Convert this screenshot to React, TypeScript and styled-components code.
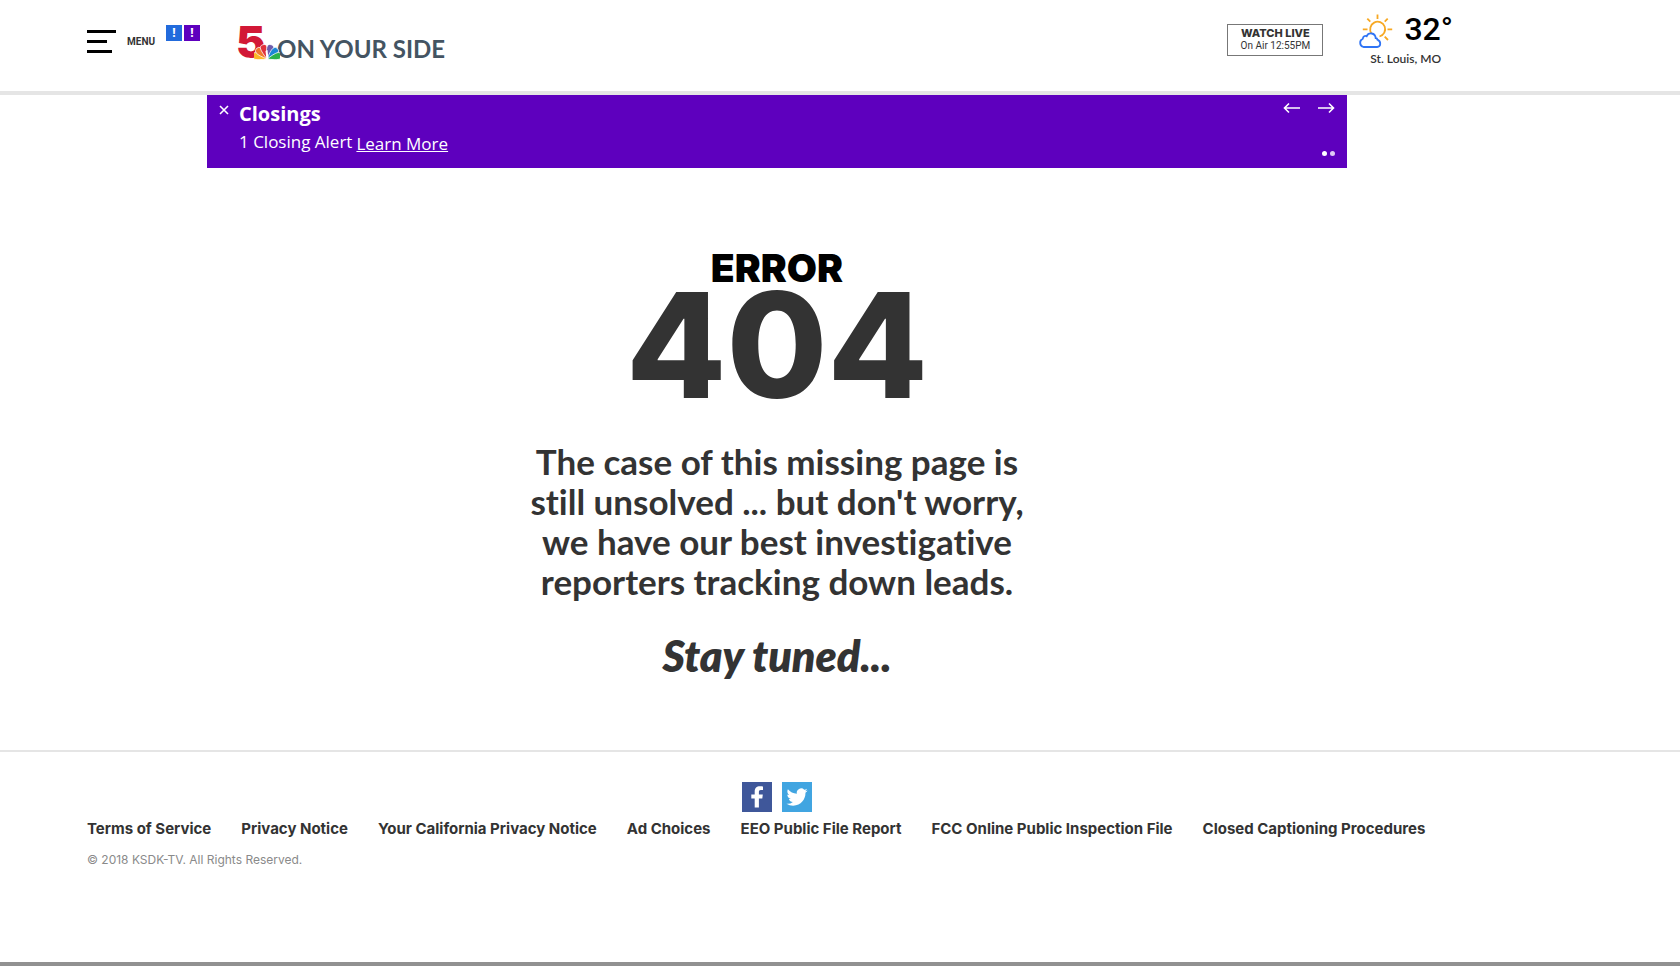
import React from "react";
import styled, { createGlobalStyle } from "styled-components";

const GlobalStyle = createGlobalStyle`
  * { box-sizing: border-box; }
  body {
    margin: 0;
    background: #fff;
    color: #333;
    font-family: Lato, "Open Sans", sans-serif;
    font-variant-ligatures: none;
  }
  h1, h2, p, ul { margin: 0; padding: 0; }
  button { font: inherit; border: 0; padding: 0; background: none; color: inherit; cursor: pointer; }
  a { color: inherit; text-decoration: none; }
`;

const Page = styled.div`
  min-height: 100vh;
  display: flex;
  flex-direction: column;
  border-bottom: 4px solid #919191;
`;

const Header = styled.header`
  display: flex;
  align-items: flex-start;
  justify-content: space-between;
  height: 95px;
  padding: 0 227px 0 87px;
  border-bottom: 4px solid #e5e5e5;
`;

const HeaderGroup = styled.div`
  display: flex;
  align-items: flex-start;
`;

const MenuButton = styled.button`
  display: flex;
  align-items: center;
  gap: 11px;
  margin-top: 30px;
  font: 700 10px/12px Roboto, sans-serif;
`;

const MenuBars = styled.span`
  display: flex;
  flex-direction: column;
  gap: 7px;
  width: 29px;
`;

const Bar = styled.span<{ $width: number }>`
  height: 3px;
  width: ${(p) => p.$width}px;
  background: #000;
`;

const Badges = styled.div`
  display: flex;
  gap: 2px;
  margin: 25px 0 0 11px;
`;

const Badge = styled.button<{ $color: string }>`
  width: 16px;
  height: 16px;
  background: ${(p) => p.$color};
  color: #fff;
  font: 700 12px/16px "Open Sans", sans-serif;
`;

const Logo = styled.a`
  position: relative;
  display: flex;
  align-items: baseline;
  margin: 20px 0 0 36px;
  line-height: 44px;
`;

const LogoNumber = styled.span`
  width: 41px;
  color: #d21836;
  font-family: Inter, sans-serif;
  font-weight: 900;
  font-size: 44px;
`;

const LogoName = styled.span`
  color: #445462;
  font-family: Lato, sans-serif;
  font-weight: 700;
  font-size: 24px;
`;

const Peacock = styled.svg`
  position: absolute;
  left: 18px;
  top: 23px;
`;

const WatchLive = styled.a`
  display: flex;
  flex-direction: column;
  align-items: center;
  width: 96px;
  height: 32px;
  margin: 24px 35px 0 0;
  padding-top: 1px;
  border: 1px solid #777;
  font: 400 10px/12px Roboto, sans-serif;
`;

const WatchTitle = styled.strong`
  font: 800 11px/14px Inter, sans-serif;
`;

const Weather = styled.a`
  display: flex;
  flex-direction: column;
  align-items: center;
  margin-top: 13px;
`;

const WeatherNow = styled.span`
  display: flex;
  gap: 10px;
  height: 36px;
`;

const Temperature = styled.span`
  color: #000;
  font: 500 32px/32px Roboto, sans-serif;
`;

const City = styled.span`
  margin-top: 3px;
  font: 600 12px/14px Lato, sans-serif;
`;

const Content = styled.div`
  padding-right: 126px;
`;

const Banner = styled.section`
  display: flex;
  justify-content: space-between;
  max-width: 1140px;
  min-height: 73px;
  margin: 0 auto;
  padding: 7px 12px 12px;
  background: #5e00be;
  color: #fff;
  font-family: "Open Sans", sans-serif;
`;

const BannerMain = styled.div`
  display: flex;
  align-items: flex-start;
  gap: 10px;
`;

const CloseButton = styled.button`
  display: flex;
  margin-top: 3px;
`;

const BannerTitle = styled.h2`
  font-size: 20px;
  line-height: 24px;
  font-weight: 700;
`;

const BannerText = styled.p`
  display: flex;
  gap: 4px;
  margin-top: 4px;
  font-size: 17px;
  line-height: 24px;
`;

const LearnMore = styled.a`
  align-self: flex-end;
  margin-top: 4px;
  line-height: 20px;
  text-decoration: underline;
`;

const BannerControls = styled.div`
  display: flex;
  flex-direction: column;
  align-items: flex-end;
  justify-content: space-between;
`;

const Arrows = styled.div`
  display: flex;
  gap: 18px;
`;

const ArrowButton = styled.button`
  display: flex;
`;

const Dots = styled.div`
  display: flex;
  gap: 3px;
`;

const Dot = styled.button<{ $active?: boolean }>`
  width: 5px;
  height: 5px;
  border-radius: 50%;
  background: ${(p) => (p.$active ? "#fff" : "#dfcaf5")};
`;

const Message = styled.main`
  display: flex;
  flex-direction: column;
  align-items: center;
  padding: 76px 0 68px;
  text-align: center;
`;

const ErrorTitle = styled.h1`
  display: flex;
  flex-direction: column;
  align-items: center;
  color: #000;
  font: 900 39px/48px Inter, sans-serif;
`;

const ErrorCode = styled.span`
  color: #333;
  font: 800 146px/106px Inter, sans-serif;
`;

const Story = styled.p`
  max-width: 510px;
  margin-top: 43px;
  font-size: 35px;
  line-height: 40px;
  font-weight: 700;
`;

const StayTuned = styled.p`
  margin-top: 30px;
  font-size: 43px;
  line-height: 50px;
  font-weight: 800;
  font-style: italic;
`;

const Footer = styled.footer`
  margin-top: 1px;
  border-top: 2px solid #e5e5e5;
  padding: 30px 126px 80px 87px;
`;

const Social = styled.div`
  display: flex;
  justify-content: center;
  gap: 10px;
  padding-right: 87px;
`;

const SocialLink = styled.a<{ $color: string }>`
  display: block;
  width: 30px;
  height: 30px;
  background: ${(p) => p.$color};
`;

const FooterLinks = styled.ul`
  display: flex;
  flex-wrap: wrap;
  gap: 0 30px;
  margin-top: 7px;
  list-style: none;
  font: 700 15px/20px Inter, sans-serif;
`;

const Copyright = styled.p`
  margin-top: 12px;
  color: #8a8a8a;
  font: 400 12px/18px Inter, sans-serif;
`;

const petals = [
  { color: "#fcb827", angle: -75 },
  { color: "#f0782b", angle: -45 },
  { color: "#e0323c", angle: -16 },
  { color: "#6e5bab", angle: 16 },
  { color: "#1b87d6", angle: 45 },
  { color: "#2bb24c", angle: 75 },
];

const footerLinks = [
  "Terms of Service",
  "Privacy Notice",
  "Your California Privacy Notice",
  "Ad Choices",
  "EEO Public File Report",
  "FCC Online Public Inspection File",
  "Closed Captioning Procedures",
];

function PeacockMark() {
  return (
    <Peacock width="26" height="17" viewBox="0 0 26 17" aria-hidden="true">
      {petals.map((p) => (
        <path
          key={p.color}
          d="M13 16 C11 11 9.600 7 9.600 4.500 A3.400 3.400 0 0 1 16.400 4.500 C16.400 7 15 11 13 16Z"
          fill={p.color}
          stroke="#fff"
          strokeWidth="0.7"
          transform={`rotate(${p.angle} 13 16)`}
        />
      ))}
      <path d="M11.500 8 L13.500 7 L14.500 16 H12.500Z" fill="#fff" />
    </Peacock>
  );
}

function PartlyCloudy() {
  return (
    <svg width="36" height="36" viewBox="0 0 36 36" fill="none" strokeWidth="1.8" aria-hidden="true">
      <g stroke="#f7a823">
        <path d="M13.500 20.500 A7.500 7.500 0 1 1 21.500 23.500" />
        <path d="M19.500 1.500v4.500M9.300 5.700l3 3M29.700 5.700l-3 3M4.800 16.300h4.700M29.500 16.300h4.700M26.700 23.700l3.300 3.300" />
      </g>
      <path
        stroke="#2f74f5"
        d="M5.500 34 A4.400 4.400 0 0 1 4.800 25.700 C5 23.200 7 22.500 8.600 23.300 C10.500 18.900 17.300 19.600 17.700 25.200 C19 25.200 19.300 25.700 19.400 26.700 C23.600 28.500 22.800 34 19.200 34Z"
      />
    </svg>
  );
}

export default function App() {
  return (
    <>
      <GlobalStyle />
      <Page>
        <Header>
          <HeaderGroup>
            <MenuButton>
              <MenuBars>
                <Bar $width={29} />
                <Bar $width={20} />
                <Bar $width={25} />
              </MenuBars>
              MENU
            </MenuButton>
            <Badges>
              <Badge $color="#226bdc" aria-label="Weather alert">!</Badge>
              <Badge $color="#5e00be" aria-label="Closing alert">!</Badge>
            </Badges>
            <Logo href="#">
              <LogoNumber>5</LogoNumber>
              <PeacockMark />
              <LogoName>ON YOUR SIDE</LogoName>
            </Logo>
          </HeaderGroup>
          <HeaderGroup>
            <WatchLive href="#">
              <WatchTitle>WATCH LIVE</WatchTitle>
              On Air 12:55PM
            </WatchLive>
            <Weather href="#">
              <WeatherNow>
                <PartlyCloudy />
                <Temperature>32°</Temperature>
              </WeatherNow>
              <City>St. Louis, MO</City>
            </Weather>
          </HeaderGroup>
        </Header>
        <Content>
          <Banner>
            <BannerMain>
              <CloseButton aria-label="Close">
                <svg width="10" height="10" viewBox="0 0 10 10" stroke="#fff" strokeWidth="1.6">
                  <path d="M1 1l8 8M9 1l-8 8" />
                </svg>
              </CloseButton>
              <div>
                <BannerTitle>Closings</BannerTitle>
                <BannerText>
                  1 Closing Alert <LearnMore href="#">Learn More</LearnMore>
                </BannerText>
              </div>
            </BannerMain>
            <BannerControls>
              <Arrows>
                <ArrowButton aria-label="Previous">
                  <svg width="17" height="12" viewBox="0 0 17 12" fill="none" stroke="#fff" strokeWidth="1.6">
                    <path d="M17 6H2M6 1.500L1.500 6L6 10.500" />
                  </svg>
                </ArrowButton>
                <ArrowButton aria-label="Next">
                  <svg width="17" height="12" viewBox="0 0 17 12" fill="none" stroke="#fff" strokeWidth="1.6">
                    <path d="M0 6H15M11 1.500L15.500 6L11 10.500" />
                  </svg>
                </ArrowButton>
              </Arrows>
              <Dots>
                <Dot $active aria-label="Alert 1" />
                <Dot aria-label="Alert 2" />
              </Dots>
            </BannerControls>
          </Banner>
          <Message>
            <ErrorTitle>
              ERROR
              <ErrorCode>404</ErrorCode>
            </ErrorTitle>
            <Story>
              The case of this missing page is still unsolved ... but don't worry, we have our best
              investigative reporters tracking down leads.
            </Story>
            <StayTuned>Stay tuned...</StayTuned>
          </Message>
        </Content>
        <Footer>
          <Social>
            <SocialLink $color="#3f579a" href="#" aria-label="Facebook">
              <svg width="30" height="30" viewBox="0 0 30 30" fill="#fff">
                <path d="M12.700 25.500V16.500H9.300V12.500H12.700V9.500C12.700 6.200 14.700 4.300 17.800 4.300C19.300 4.300 20.500 4.400 21 4.500V8H18.900C17.300 8 16.900 8.800 16.900 9.900V12.500H20.800L20.300 16.500H16.900V25.500Z" />
              </svg>
            </SocialLink>
            <SocialLink $color="#41a5e1" href="#" aria-label="Twitter">
              <svg width="30" height="30" viewBox="0 0 30 30" fill="#fff">
                <path
                  transform="translate(4.500 4.500) scale(.88)"
                  d="M23.950 4.570a10 10 0 0 1-2.820.780 4.960 4.960 0 0 0 2.160-2.730c-.950.560-2 .960-3.130 1.180a4.920 4.920 0 0 0-8.380 4.480C7.690 8.100 4.070 6.130 1.640 3.160a4.900 4.900 0 0 0-.670 2.480c0 1.710.870 3.210 2.190 4.100a4.900 4.900 0 0 1-2.230-.620v.060a4.920 4.920 0 0 0 3.950 4.830 5 5 0 0 1-2.210.080 4.940 4.940 0 0 0 4.600 3.420A9.870 9.870 0 0 1 0 19.540a13.990 13.990 0 0 0 7.550 2.210c9.050 0 14-7.500 14-13.980 0-.210 0-.420-.020-.630a9.940 9.940 0 0 0 2.460-2.550z"
                />
              </svg>
            </SocialLink>
          </Social>
          <FooterLinks>
            {footerLinks.map((label) => (
              <li key={label}>
                <a href="#">{label}</a>
              </li>
            ))}
          </FooterLinks>
          <Copyright>© 2018 KSDK-TV. All Rights Reserved.</Copyright>
        </Footer>
      </Page>
    </>
  );
}
